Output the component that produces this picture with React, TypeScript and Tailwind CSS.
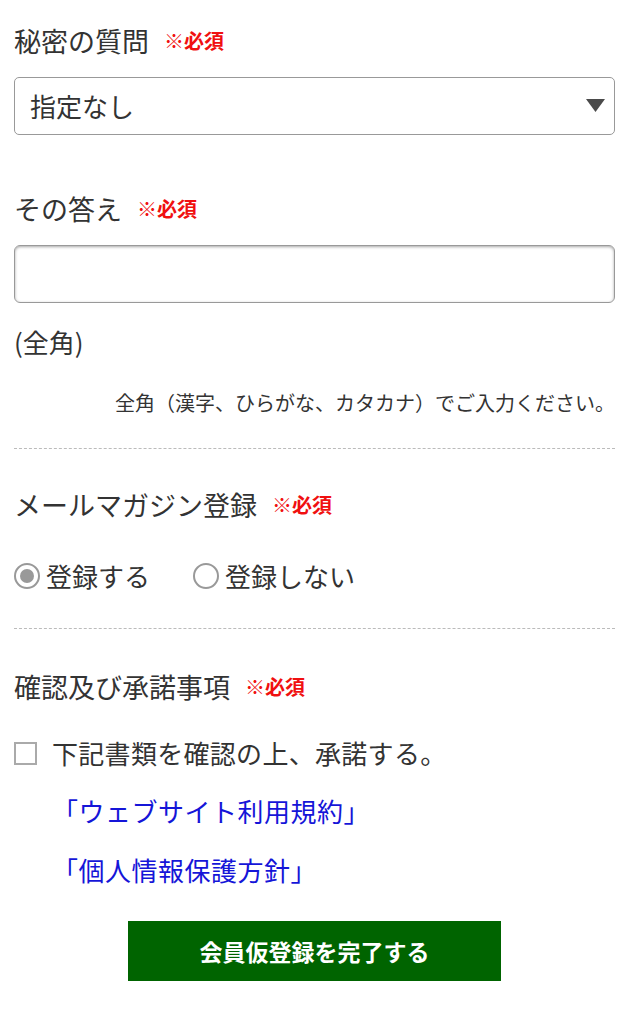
import React, { useState } from "react";

const font = "font-['Noto_Sans_CJK_JP','Noto_Sans',sans-serif]";

function Label({ text }: { text: string }) {
  return (
    <div className="flex items-center h-[36px]">
      <span className="text-[27px] leading-[36px] text-[#333]">{text}</span>
      <span className="ml-[15px] text-[20px] font-semibold leading-[36px] text-[#f01010]">※必須</span>
    </div>
  );
}

export default function App() {
  const [mag, setMag] = useState<"yes" | "no">("yes");
  const [agree, setAgree] = useState(false);

  return (
    <div className={`${font} bg-white min-h-[1024px] pl-[14px] pr-[24px] pt-[23px] text-[#333]`}>
      {/* 秘密の質問 */}
      <Label text="秘密の質問" />
      <div className="mt-[18px] relative flex h-[58px] items-center rounded-[5px] border border-[#999] pl-[15px]">
        <span className="text-[26px] leading-none">指定なし</span>
        <svg className="absolute right-[9px] top-[21px]" width="19" height="13" viewBox="0 0 19 13">
          <path d="M0 0 H19 L9.5 13 Z" fill="#4a4a4a" />
        </svg>
      </div>

      {/* その答え */}
      <div className="mt-[56px]">
        <Label text="その答え" />
      </div>
      <div className="mt-[18px] h-[58px] rounded-[6px] border border-[#999] shadow-[inset_0_1px_3px_rgba(0,0,0,0.35)]" />
      <div className="mt-[21px] text-[26px] leading-[36px]">(全角)</div>
      <div className="mt-[29px] text-right text-[20px] leading-[28px]">
        全角（漢字、ひらがな、カタカナ）でご入力ください。
      </div>

      <div className="mt-[31px] border-t border-dashed border-[#bbb]" />

      {/* メールマガジン */}
      <div className="mt-[38px]">
        <Label text="メールマガジン登録" />
      </div>
      <div className="mt-[35px] flex h-[36px] items-center text-[26px] leading-[36px]">
        <button onClick={() => setMag("yes")} className="flex items-center">
          <span className="flex h-[26px] w-[26px] items-center justify-center rounded-full border-2 border-[#999]">
            {mag === "yes" && <span className="h-[14px] w-[14px] rounded-full bg-[#999]" />}
          </span>
          <span className="ml-[6px]">登録する</span>
        </button>
        <button onClick={() => setMag("no")} className="ml-[43px] flex items-center">
          <span className="flex h-[26px] w-[26px] items-center justify-center rounded-full border-2 border-[#999]">
            {mag === "no" && <span className="h-[14px] w-[14px] rounded-full bg-[#999]" />}
          </span>
          <span className="ml-[6px]">登録しない</span>
        </button>
      </div>

      <div className="mt-[34px] border-t border-dashed border-[#bbb]" />

      {/* 確認及び承諾事項 */}
      <div className="mt-[40px]">
        <Label text="確認及び承諾事項" />
      </div>
      <button
        onClick={() => setAgree((a) => !a)}
        className="mt-[30px] flex h-[36px] items-center text-[26px] leading-[36px]"
      >
        <span className="flex h-[23px] w-[23px] items-center justify-center border-2 border-[#aaa] text-[16px]">
          {agree ? "✓" : ""}
        </span>
        <span className="ml-[15px] tracking-[0.3px]">下記書類を確認の上、承諾する。</span>
      </button>
      <div className="mt-[22px] pl-[38px] text-[26px] leading-[36px] tracking-[0.5px] text-[#1515d8]">
        <a href="#">「ウェブサイト利用規約」</a>
      </div>
      <div className="mt-[23px] pl-[38px] text-[26px] leading-[36px] tracking-[0.5px] text-[#1515d8]">
        <a href="#">「個人情報保護方針」</a>
      </div>

      <div className="mt-[33px] flex justify-center">
        <button className="flex h-[60px] w-[373px] items-center justify-center bg-[#006400] text-[23px] font-bold text-white">
          会員仮登録を完了する
        </button>
      </div>
    </div>
  );
}
